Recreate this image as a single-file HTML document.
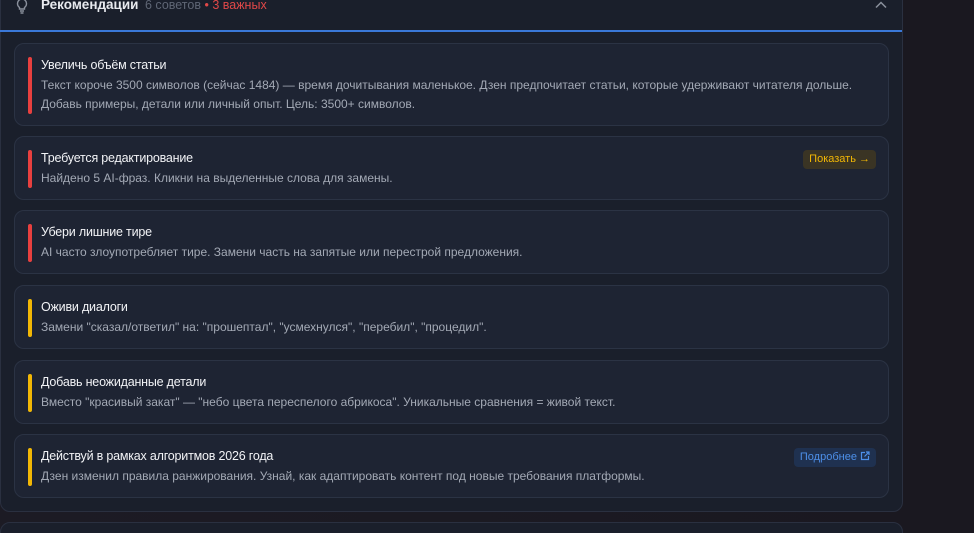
<!DOCTYPE html>
<html><head><meta charset="utf-8"><style>
*{box-sizing:border-box;margin:0;padding:0}
html,body{width:974px;height:533px;overflow:hidden}
body{background:linear-gradient(90deg,#1c1b24,#1a1820);font-family:"Liberation Sans","DejaVu Sans",sans-serif;position:relative}
.panel{position:absolute;left:0;top:-20px;width:903px;height:532px;background:#1a1f2b;border:1px solid #2a3040;border-radius:10px}
.hdr{position:absolute;left:0;top:0;width:902px;height:32px;border-bottom:2px solid #3a78d8}
.title{position:absolute;left:41px;top:-3px;font-size:13.5px;font-weight:bold;color:#e8eaef}
.meta{position:absolute;left:145px;top:-2px;font-size:12.5px;color:#5f6675}
.meta b{color:#e04848;font-weight:normal}
.card{position:absolute;left:14px;width:875px;background:#1e2433;border:1px solid #2b3344;border-radius:10px}
.bar{position:absolute;left:13px;width:4px;border-radius:2px}
.r{background:#e8403f}.y{background:#f2b705}
.ct{position:absolute;left:26px;font-size:12.5px;color:#f2f3f6;letter-spacing:-0.2px}
.cd{position:absolute;left:26px;font-size:12px;color:#a3a9b5;line-height:19px}
.btn{position:absolute;right:12px;top:13px;height:19px;border-radius:4px;font-size:11px;padding:3px 6px}
.b2{position:absolute;left:0;top:522px;width:903px;height:30px;background:#1a1f2b;border:1px solid #2a3040;border-radius:10px}
</style></head><body>
<div class="panel"></div>
<div class="hdr">
<svg style="position:absolute;left:15px;top:-2px" width="14" height="16" viewBox="0 0 14 16" fill="none" stroke="#8a909c" stroke-width="1.4"><path d="M4.5 9.5C3 8.4 2.5 7 2.5 5.5a4.5 4.5 0 019 0c0 1.5-.5 2.9-2 4v1.5h-5z"/><path d="M5 13h4M5.5 15h3"/></svg>
<div class="title">Рекомендации</div>
<div class="meta">6 советов <b>• 3 важных</b></div>
<svg style="position:absolute;left:875px;top:1px" width="12" height="8" viewBox="0 0 12 8" fill="none" stroke="#8a909c" stroke-width="1.5"><path d="M1 6.5l5-5 5 5"/></svg>
</div>

<div class="card" style="top:43px;height:83px"><div class="bar r" style="top:13px;height:57px"></div>
<div class="ct" style="top:14px">Увеличь объём статьи</div>
<div class="cd" style="top:32px">Текст короче 3500 символов (сейчас 1484) — время дочитывания маленькое. Дзен предпочитает статьи, которые удерживают читателя дольше.<br>Добавь примеры, детали или личный опыт. Цель: 3500+ символов.</div></div>

<div class="card" style="top:136px;height:64px"><div class="bar r" style="top:13px;height:38px"></div>
<div class="ct" style="top:14px">Требуется редактирование</div>
<div class="cd" style="top:32px">Найдено 5 AI-фраз. Кликни на выделенные слова для замены.</div>
<div class="btn" style="background:#3a3424;color:#f2b705">Показать →</div></div>

<div class="card" style="top:210px;height:64px"><div class="bar r" style="top:13px;height:38px"></div>
<div class="ct" style="top:14px">Убери лишние тире</div>
<div class="cd" style="top:32px">AI часто злоупотребляет тире. Замени часть на запятые или перестрой предложения.</div></div>

<div class="card" style="top:285px;height:64px"><div class="bar y" style="top:13px;height:38px"></div>
<div class="ct" style="top:14px">Оживи диалоги</div>
<div class="cd" style="top:32px">Замени "сказал/ответил" на: "прошептал", "усмехнулся", "перебил", "процедил".</div></div>

<div class="card" style="top:360px;height:64px"><div class="bar y" style="top:13px;height:38px"></div>
<div class="ct" style="top:14px">Добавь неожиданные детали</div>
<div class="cd" style="top:32px">Вместо "красивый закат" — "небо цвета переспелого абрикоса". Уникальные сравнения = живой текст.</div></div>

<div class="card" style="top:434px;height:64px"><div class="bar y" style="top:13px;height:38px"></div>
<div class="ct" style="top:14px">Действуй в рамках алгоритмов 2026 года</div>
<div class="cd" style="top:32px">Дзен изменил правила ранжирования. Узнай, как адаптировать контент под новые требования платформы.</div>
<div class="btn" style="background:#1f3150;color:#4d8fe8">Подробнее <svg width="10" height="10" viewBox="0 0 10 10" fill="none" stroke="#4d8fe8" stroke-width="1.2" style="vertical-align:-1px"><path d="M5 1.5H1.5v7h7V5M6 1h3v3M9 1L4.5 5.5"/></svg></div></div>

<div class="b2"></div>
</body></html>
